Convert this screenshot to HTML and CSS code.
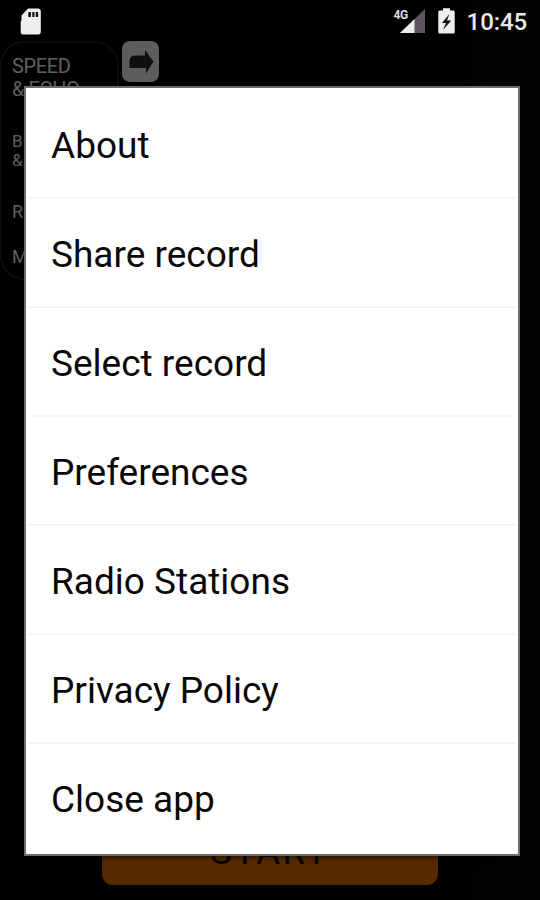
FILE: index.html
```
<!DOCTYPE html>
<html lang="en">
<head>
<meta charset="utf-8">
<title>Recorder</title>
<link rel="stylesheet" href="styles.css">
</head>
<body>
<div class="screen">
  <header class="status">
    <svg class="sd" width="22" height="27" viewBox="0 0 22 27"><path d="M8 0.500H18.500Q20.800 .5 20.800 3V23.500Q20.800 26.500 18.500 26.500H3Q.7 26.500 .7 23.500V14L1.500 12V7.500Z" fill="#eee"/><path d="M8.300 4h2.600v5H8.300zM12.300 4h2.200v5h-2.200zM15.800 4h2.300v5h-2.300z" fill="#111"/></svg>
    <div class="right">
      <div class="network">
        <span class="gen">4G</span>
        <svg width="25" height="24" viewBox="0 0 25 24"><path d="M25 0V24H0Z" fill="#5b565b"/><path d="M14.500 10V24H0Z" fill="#eee"/></svg>
      </div>
      <svg class="battery" width="17" height="26" viewBox="0 0 17 26"><path d="M5 2.500V.3H12V2.500H15.500Q16.700 2.500 16.700 4V24Q16.700 25.500 15.500 25.500H1.500Q.3 25.500 .3 24V4Q.3 2.500 1.500 2.500Z" fill="#eee"/><path d="M11.500 6L4 15H8L5 22L13.200 12.500H9Z" fill="#111"/></svg>
      <span class="clock">10:45</span>
    </div>
  </header>
  <main class="app">
    <div class="top">
      <div class="panel">
        <p class="speed">SPEED<br>&amp; ECHO</p>
        <p class="bass">B<br>&amp;</p>
        <p class="row">R</p>
        <p class="row">M</p>
      </div>
      <div class="next"><svg width="37" height="41" viewBox="0 0 37 41"><path d="M7.500 27V19.500Q8 14.500 13 14.500H23V9L31.500 20.500L24 32.500V27Z" fill="#0b120b"/></svg></div>
    </div>
    <div class="start">START</div>
  </main>
  <ul class="menu">
    <li>About</li>
    <li>Share record</li>
    <li>Select record</li>
    <li>Preferences</li>
    <li>Radio Stations</li>
    <li>Privacy Policy</li>
    <li>Close app</li>
  </ul>
</div>
</body>
</html>
```
FILE: styles.css
```
* { box-sizing: border-box; }
body { margin: 0; background: #000; font-family: Roboto, "Liberation Sans", sans-serif; }
.screen {
  position: relative;
  width: 540px;
  height: 900px;
  overflow: hidden;
  display: flex;
  flex-direction: column;
  background: linear-gradient(90deg, #000 85%, #020402 95%);
}
.status {
  height: 41px;
  display: flex;
  justify-content: space-between;
  align-items: flex-start;
  padding: 7px 13px 0 20px;
}
.sd { margin-top: 1px; }
.right { display: flex; align-items: flex-start; }
.network { display: flex; position: relative; margin: 2px 13px 0 0; }
.gen {
  position: absolute;
  left: -6px;
  top: -1px;
  font-size: 12px;
  line-height: 14px;
  font-weight: 700;
  letter-spacing: -.5px;
  color: #ddd;
}
.battery { margin-top: 1px; }
.clock {
  margin: 1px 0 0 12px;
  font-size: 24px;
  line-height: 28px;
  font-weight: 500;
  letter-spacing: -.1px;
  color: #e8e8e8;
}
.app {
  flex: 1;
  display: flex;
  flex-direction: column;
  justify-content: space-between;
  align-items: center;
  padding-bottom: 15px;
}
.top { display: flex; align-self: stretch; gap: 3px; }
.panel {
  width: 119px;
  height: 239px;
  border: 2px solid #0c0c0c;
  border-radius: 24px;
  padding: 12px 0 0 10px;
  color: #606060;
}
.panel p { margin: 0; white-space: nowrap; }
.panel .speed { font-size: 20px; line-height: 23px; letter-spacing: -.4px; }
.panel .bass { font-size: 17px; line-height: 19px; margin-top: 31px; }
.panel .row { font-size: 18px; line-height: 21px; margin-top: 31px; }
.panel .row + .row { margin-top: 24px; }
.next {
  width: 37px;
  height: 41px;
  border-radius: 8px;
  background: #5c5e5c;
}
.next svg { display: block; }
.start {
  width: 336px;
  height: 65px;
  border-radius: 11px;
  background: #552a00;
  color: #080400;
  font-size: 36px;
  line-height: 65px;
  letter-spacing: 2.500px;
  text-align: center;
}
.menu {
  position: absolute;
  left: 24px;
  top: 86px;
  width: 496px;
  height: 770px;
  margin: 0;
  padding: 0 2px;
  list-style: none;
  background: #fff;
  border: 2px solid #6c6c6c;
  box-shadow: 0 2px 5px rgba(0, 0, 0, .5);
  color: #080808;
}
.menu li {
  height: 109px;
  padding: 3px 0 0 23px;
  font-size: 37px;
  line-height: 109px;
}
.menu li + li { border-top: 2px solid #f5f5f5; padding-top: 1px; }
```
